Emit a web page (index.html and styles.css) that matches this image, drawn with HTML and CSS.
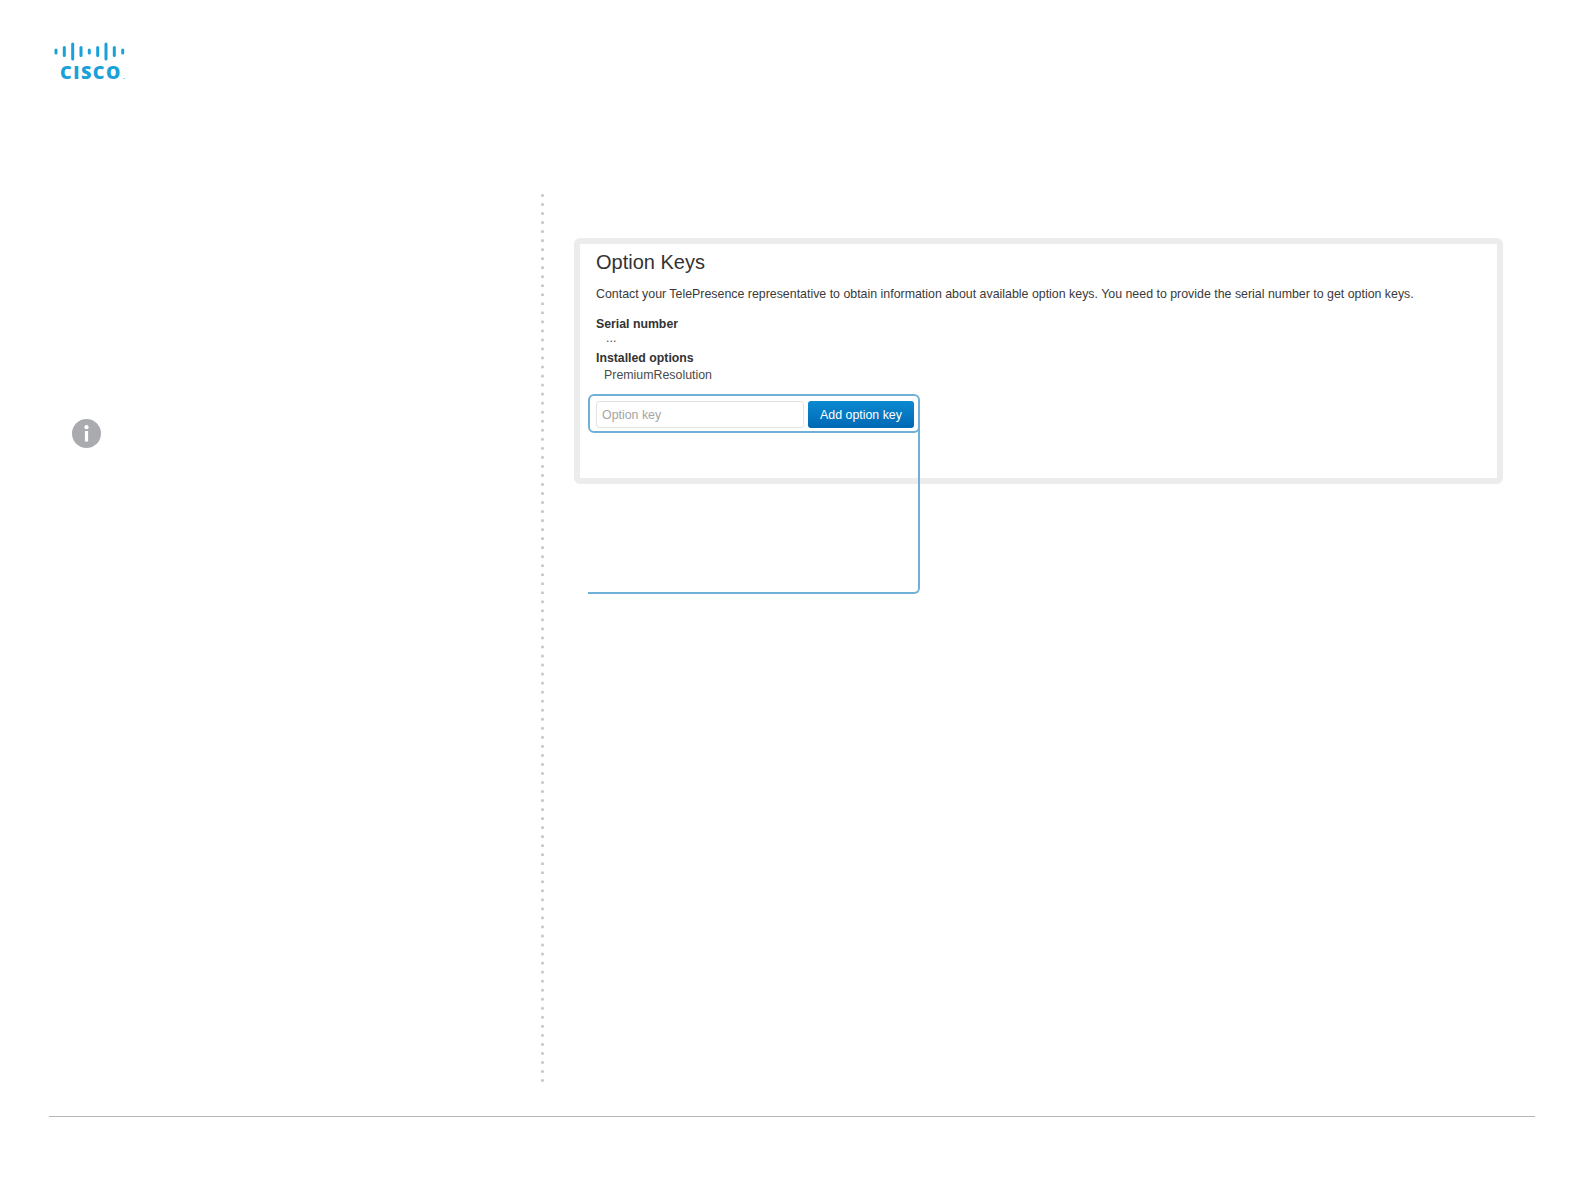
FILE: index.html
```html
<!DOCTYPE html>
<html lang="en">
<head>
<meta charset="utf-8">
<title>Option Keys</title>
<link rel="stylesheet" href="styles.css">
</head>
<body>
<div class="page">
  <header class="header">
    <div class="logo">
      <svg class="logo-bars" width="72" height="19" viewBox="0 0 72 19" aria-hidden="true">
        <g stroke="#1ba0d7" stroke-width="3" stroke-linecap="round">
          <line x1="2" y1="8" x2="2" y2="11"/>
          <line x1="10.3" y1="5.5" x2="10.3" y2="13.5"/>
          <line x1="18.7" y1="2" x2="18.7" y2="17"/>
          <line x1="27" y1="5.5" x2="27" y2="13.5"/>
          <line x1="35.3" y1="8" x2="35.3" y2="11"/>
          <line x1="43.7" y1="5.5" x2="43.7" y2="13.5"/>
          <line x1="52" y1="2" x2="52" y2="17"/>
          <line x1="60.3" y1="5.5" x2="60.3" y2="13.5"/>
          <line x1="68.7" y1="8" x2="68.7" y2="11"/>
        </g>
      </svg>
      <div class="logo-text">CISCO<span class="logo-dot">.</span></div>
    </div>
  </header>
  <main class="main">
    <aside class="side">
      <svg class="info" width="29" height="29" viewBox="0 0 29 29" aria-hidden="true">
        <circle cx="14.5" cy="14.5" r="14.5" fill="#a9abae"/>
        <circle cx="14.5" cy="8.2" r="2.1" fill="#fff"/>
        <rect x="12.9" y="12" width="3.2" height="10.5" fill="#fff"/>
      </svg>
    </aside>
    <div class="divider"></div>
    <section class="content">
      <div class="card">
        <h1 class="title">Option Keys</h1>
        <p class="lead">Contact your TelePresence representative to obtain information about available option keys. You need to provide the serial number to get option keys.</p>
        <h2 class="label label-serial">Serial number</h2>
        <div class="value value-serial">...</div>
        <h2 class="label">Installed options</h2>
        <div class="value">PremiumResolution</div>
        <form class="key-row">
          <input class="key-input" type="text" placeholder="Option key">
          <button class="key-button" type="button">Add option key</button>
          <div class="callout"></div>
        </form>
      </div>
    </section>
  </main>
  <footer class="footer"></footer>
</div>
</body>
</html>
```
FILE: styles.css
```css
* { box-sizing: border-box; }
html, body { margin: 0; padding: 0; background: #fff; }
body { font-family: "Liberation Sans", Arial, sans-serif; color: #333; }
.page { width: 1584px; height: 1191px; padding: 0 49px; }

.header { height: 194px; padding: 42px 0 0 5px; }
.logo { width: 74px; }
.logo-bars { display: block; }
.logo-text {
  margin: 3px 0 0 6px;
  font-family: "Open Sans", "Liberation Sans", sans-serif;
  font-size: 18px;
  line-height: 17px;
  font-weight: 800;
  letter-spacing: 1.5px;
  color: #1ba0d7;
  white-space: nowrap;
}
.logo-dot { margin-left: 1px; font-size: 6px; letter-spacing: 0; font-weight: 700; }

.main { display: flex; height: 889px; }
.side { width: 492px; padding: 225px 0 0 23px; }
.info { display: block; }
.divider {
  width: 3px;
  margin-bottom: -1px;
  background-image: radial-gradient(circle at 1.5px 1.5px, #c8c8c8 1.2px, transparent 1.7px);
  background-size: 3px 9.04px;
}
.content { flex: 1; padding: 44px 0 0 30px; }

.card {
  width: 929px;
  height: 246px;
  border: 6px solid #ececec;
  border-radius: 6px;
  padding: 6px 0 0 16px;
  background: #fff;
}
.title { margin: 0; font-size: 20px; line-height: 24px; font-weight: 400; color: #333; }
.lead { margin: 12px 0 0; font-size: 12.38px; line-height: 16px; color: #3a3a3a; white-space: nowrap; }
.label { margin: 0; font-size: 12.3px; line-height: 15px; font-weight: 700; color: #333; }
.label-serial { margin-top: 15px; }
.value { padding-left: 8px; font-size: 12.38px; line-height: 18px; color: #4a4a4a; }
.value-serial { height: 12px; line-height: 8px; padding-left: 10px; margin-top: 2px; margin-bottom: 5px; }

.key-row {
  position: relative;
  display: flex;
  gap: 4px;
  width: 332px;
  height: 39px;
  margin: 10px 0 0 -8px;
  padding: 5px 4px 0 6px;
  border: 2px solid #6fb1d6;
  border-radius: 6px;
}
.key-input {
  width: 208px;
  height: 27px;
  padding: 0 5px;
  border: 1px solid #e3e3e3;
  border-radius: 3px;
  background: #fff;
  font: 12.38px "Liberation Sans", Arial, sans-serif;
  color: #555;
}
.key-input::placeholder { color: #a5a5a5; opacity: 1; }
.key-button {
  width: 106px;
  height: 27px;
  padding: 0;
  border: 0;
  border-radius: 3px;
  background: linear-gradient(#0a8ad0, #0068b5);
  font: 12.38px "Liberation Sans", Arial, sans-serif;
  color: #fff;
}
.callout {
  position: absolute;
  left: -2px;
  right: -2px;
  top: 27px;
  height: 171px;
  border-right: 2px solid #6fb1d6;
  border-bottom: 2px solid #6fb1d6;
  border-bottom-right-radius: 6px;
}

.footer { margin-top: 33px; height: 1px; background: #b5b5b5; }
```
